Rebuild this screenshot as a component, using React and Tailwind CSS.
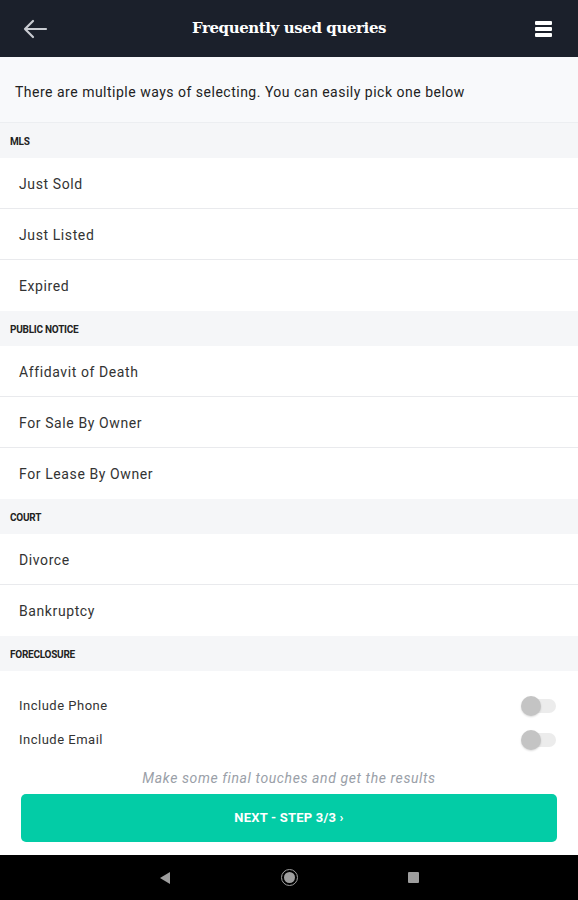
import React from 'react';

const sections = [
  { title: 'MLS', items: ['Just Sold', 'Just Listed', 'Expired'] },
  { title: 'PUBLIC NOTICE', items: ['Affidavit of Death', 'For Sale By Owner', 'For Lease By Owner'] },
  { title: 'COURT', items: ['Divorce', 'Bankruptcy'] },
];

const SectionHeader = ({ title }) => (
  <div className="h-[35px] flex items-center pt-[2px] px-[10px] bg-[#f5f6f8] text-[10px] font-bold text-[#222] tracking-tight">
    {title}
  </div>
);

const Toggle = () => (
  <div className="relative w-[36px] h-[20px] flex items-center">
    <div className="absolute left-[8px] right-0 h-[14px] rounded-full bg-[#ececec]" />
    <div className="absolute left-[1px] w-[20px] h-[20px] rounded-full bg-[#c4c4c4] shadow-[0_1px_2px_rgba(0,0,0,0.15)]" />
  </div>
);

export default function App() {
  return (
    <div className="w-[578px] h-[900px] flex flex-col bg-white" style={{ fontFamily: 'Roboto, "Liberation Sans", sans-serif' }}>
      {/* top bar */}
      <div className="h-[57px] bg-[#1b202b] flex items-center justify-between px-[22px] shrink-0">
        <svg width="26" height="22" viewBox="0 0 26 22" fill="none" stroke="#c9ccd2" strokeWidth="2.2" strokeLinecap="round" strokeLinejoin="round">
          <path d="M24 11H3M11 3l-8 8 8 8" />
        </svg>
        <div className="text-white text-[15px] font-bold tracking-[-0.4px]" style={{ fontFamily: '"DejaVu Serif", "Liberation Serif", serif' }}>
          Frequently used queries
        </div>
        <div className="w-[26px] flex justify-end pr-[4px]">
          <div className="flex flex-col gap-[2px]">
            <div className="w-[17px] h-[4px] bg-white rounded-[1px]" />
            <div className="w-[17px] h-[4px] bg-white rounded-[1px]" />
            <div className="w-[17px] h-[4px] bg-white rounded-[1px]" />
          </div>
        </div>
      </div>

      <div className="h-[66px] bg-[#f8f9fb] flex items-center pt-[6px] px-[15px] text-[14px] tracking-[0.5px] text-[#222] border-b border-[#eceef1] shrink-0">
        There are multiple ways of selecting. You can easily pick one below
      </div>

      {sections.map(s => (
        <div key={s.title}>
          <SectionHeader title={s.title} />
          {s.items.map((it, i) => (
            <div key={it}
              className={`h-[51px] flex items-center pt-[2px] px-[19px] text-[14px] tracking-[0.6px] text-[#333] ${i < s.items.length - 1 ? 'border-b border-[#e9eaed]' : ''}`}>
              {it}
            </div>
          ))}
        </div>
      ))}

      <SectionHeader title="FORECLOSURE" />

      <div className="flex flex-col pt-[25px] px-[19px] pr-[22px] gap-[14px]">
        <div className="flex items-center justify-between h-[20px] text-[13px] tracking-[0.5px] text-[#333]">
          <span>Include Phone</span>
          <Toggle />
        </div>
        <div className="flex items-center justify-between h-[20px] text-[13px] tracking-[0.5px] text-[#333]">
          <span>Include Email</span>
          <Toggle />
        </div>
      </div>

      <div className="mt-[18px] text-center text-[14px] tracking-[0.6px] italic text-[#9aa0a8]">
        Make some final touches and get the results
      </div>

      <div className="px-[21px] mt-[5px]">
        <div className="h-[48px] rounded-[5px] bg-[#03cca6] flex items-center justify-center text-white text-[13px] font-bold tracking-[0.2px]">
          NEXT - STEP 3/3 ›
        </div>
      </div>

      <div className="flex-1" />

      {/* android nav */}
      <div className="h-[45px] bg-black flex items-center justify-center gap-[110px] shrink-0">
        <svg width="12" height="14" viewBox="0 0 12 14"><path d="M11 1v12L1 7z" fill="#9e9e9e" /></svg>
        <div className="w-[17px] h-[17px] rounded-full border-[1.5px] border-[#9e9e9e] flex items-center justify-center">
          <div className="w-[11px] h-[11px] rounded-full bg-[#9e9e9e]" />
        </div>
        <div className="w-[11px] h-[11px] bg-[#9e9e9e] rounded-[1px]" />
      </div>
    </div>
  );
}
